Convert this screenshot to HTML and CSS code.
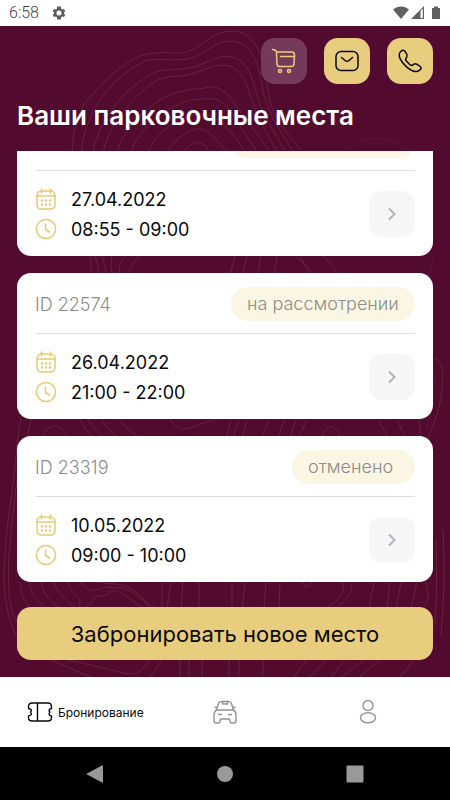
FILE: index.html
```html
<!DOCTYPE html>
<html lang="ru">
<head>
<meta charset="utf-8">
<meta name="viewport" content="width=device-width, initial-scale=1">
<title>Ваши парковочные места</title>
<link rel="stylesheet" href="styles.css">
</head>
<body>
<svg class="sprite" aria-hidden="true">
  <symbol id="calendar" viewBox="0 0 22 22">
    <rect x="2" y="3" width="18" height="18" rx="4.5"/>
    <path d="M2 8H20M6.500 1V5M15.500 1V5"/>
    <path d="M7 12.500h.1M11 12.500h.1M15 12.500h.1M7 16.500h.1M11 16.500h.1M15 16.500h.1" stroke-width="2.4"/>
  </symbol>
  <symbol id="clock" viewBox="0 0 22 22">
    <circle cx="11" cy="11" r="9.6"/>
    <path d="M10.500 6V11.500L14.500 14"/>
  </symbol>
  <symbol id="chevron" viewBox="0 0 14 14">
    <path d="M4 1.500L9.500 7L4 12.500"/>
  </symbol>
</svg>

<div class="app">
  <div class="status">
    <span class="status-time">6:58</span>
    <svg class="gear" viewBox="0 0 24 24" aria-hidden="true"><path fill-rule="evenodd" d="M19.400 13a7.800 7.800 0 0 0 0-2l2.100-1.600-2-3.500-2.500 1a7.500 7.500 0 0 0-1.700-1l-.4-3.600H9.100l-.4 3.600a7.500 7.500 0 0 0-1.700 1l-2.500-1-2 3.500L4.600 11a7.800 7.800 0 0 0 0 2l-2.100 1.600 2 3.500 2.500-1a7.500 7.500 0 0 0 1.700 1l.4 3.600h5.800l.4-3.600a7.500 7.500 0 0 0 1.700-1l2.500 1 2-3.500zM12 8.200a3.800 3.800 0 1 1 0 7.600 3.800 3.800 0 0 1 0-7.600z"/></svg>
    <svg class="signals" viewBox="0 0 50 16" aria-hidden="true">
      <path d="M1 4.500C6 .5 12 .5 17 4.500L9 14z"/>
      <path d="M32 1V14H19zM28.500 6V13H30.800V3.500z" fill-rule="evenodd"/>
      <path d="M42 1.500h4V3h2v11h-8V3h2z"/>
    </svg>
  </div>

  <main class="screen">
    <svg class="contours" viewBox="0 26 450 651" preserveAspectRatio="xMidYMin slice" aria-hidden="true">
      <path d="M72 160C72 120 82 105 92 95C112 72 135 53 155 53C170 51 180 56 192 50C207 43 212 31 233 31C252 32 262 50 266 75C269 98 270 112 285 130C292 140 298 145 304 156"/>
      <path d="M81 160C81 122 105 80 145 61C160 57 180 63 195 57C210 50 215 41 233 41C250 43 258 60 262 85C265 105 275 125 296 156"/>
      <path d="M92 160C95 128 116 95 150 75C164 66 182 72 197 66C212 60 218 55 232 57C246 60 252 75 256 92C261 112 273 130 288 156"/>
      <path d="M102 160C104 135 124 104 152 83C166 73 184 79 200 71C212 66 220 64 230 66C243 71 247 86 251 98C257 118 268 135 280 156"/>
      <path d="M115 160C118 138 138 112 165 97C183 88 198 90 210 87C224 86 230 98 238 108C250 126 262 138 272 156"/>
      <path d="M129 160C132 140 150 118 175 106C190 97 205 99 215 99C228 101 238 125 260 156"/>
      <path d="M146 160C150 140 166 126 183 118C198 112 210 113 220 121C231 132 240 142 247 156"/>
      <path d="M164 160C168 146 179 137 190 131C202 125 210 132 220 144L231 156M180 156C188 145 196 140 203 144L213 156"/>
      <path class="faint" d="M344 151C354 142 362 139 374 139C390 138 400 142 407 150"/>
      <path d="M90 256C91 267 92 272 91 278M95 256C98 266 100 270 97 278M102 256C105 266 107 270 104 278M112 256C110 266 111 270 115 278M126 256C117 266 118 270 122 278M139 256C132 264 128 270 128 278"/>
      <path d="M235 256L229 278M247 256L242 278M261 256L257 278M277 256L274 278M295 256Q306 264 318 278M301 256Q304 266 312 278M323 256Q334 264 339 278"/>
      <path d="M433 358C444 360 444 375 441 398C437 420 430 430 425 445"/>
      <path class="faint" d="M434 372C435 396 432 411 426 430M435 250C430 268 431 276 428 280"/>
      <path d="M22 414C18 430 17 450 13 485C8 520 4 550 4 580C5 605 10 628 19 640M18 472C13 510 11 535 9 555C7 595 10 611 18 624M42 437C48 423 60 422 68 437M31 419L27 437M80 419Q84 430 94 438M88 419Q95 431 105 438M101 419Q110 432 119 438M119 419Q127 430 140 438M170 419Q178 431 187 429L215 419"/>
      <path d="M231 419L226 438M239 419L233 438M247 419L242 438M269 419L262 438M285 419Q281 427 278 438M321 438Q331 415 341 438M296 419L290 438M307 419L299 438M378 419Q382 428 389 438M397 419L405 438M419 419L421 438"/>
      <path d="M20 582C20 592 24 602 32 609M30 582C29 594 39 603 47 609M41 582C43 595 52 604 63 609M54 582C58 594 66 600 76 609M68 582C70 593 84 599 79 604C77 609 91 608 93 600C98 591 105 600 110 592C116 587 128 598 143 608M80 582C93 599 102 583 113 588C129 585 141 601 154 607M95 582C115 585 133 580 150 609M162 582V609M171 582L167 609M183 582L181 609M199 582V609"/>
      <path d="M232 582V609M245 582L242 609M266 582L264 609M280 582L279 609M303 582Q306 592 312 582M325 609C341 600 345 591 343 582M335 609C349 598 352 591 352 582M374 582L369 609M390 582L387 609M401 582L396 609M417 582L411 609M426 582C431 598 426 604 423 609M436 540C437 570 437 590 435 625M443 530C445 570 444 600 441 635"/>
      <path d="M49 659L90 677M65 659L128 674C139 675 147 665 149 659M162 659Q157 669 150 677M180 659V677M189 659V677M202 659V677M229 659V677M239 659V677M263 659V677M307 659L294 677M327 659L310 677M346 659L331 677M365 659L342 677M380 659L360 677M413 659Q407 671 400 677"/>
    </svg>

    <header class="header">
      <div class="actions">
        <button class="action action-muted" type="button" aria-label="Корзина">
          <svg viewBox="0 0 26 26"><path d="M1.500 1.500Q5.500 1.500 5.500 5L6 16Q6 18.500 8.500 18.500H20Q23 18.500 23 15.500L23.500 7Q23.500 4 20.500 4H5.500M9.500 8.500H23"/><circle cx="9" cy="23" r="1.500"/><circle cx="18" cy="23" r="1.500"/></svg>
        </button>
        <button class="action" type="button" aria-label="Сообщения">
          <svg viewBox="0 0 26 26"><rect x="2" y="3.500" width="22" height="19" rx="5"/><path d="M7.500 9.500L11 12.500Q13 14 15 12.500L18.500 9.500"/></svg>
        </button>
        <button class="action" type="button" aria-label="Позвонить">
          <svg viewBox="0 0 26 26"><path d="M4 3.300Q6.500.8 8.500 4L9.800 6.300Q10.700 8.300 9.300 9.800Q7.700 11.500 9.800 13.500L12.500 16.200Q14.500 18.300 16.200 16.700Q17.700 15.300 19.700 16.200L22.800 18.200Q25.700 20.500 22 22.700C19 25 13.500 22.500 9.500 18.900C4.500 14.300-.5 7.300 4 3.300Z"/></svg>
        </button>
      </div>
      <h1 class="title">Ваши парковочные места</h1>
    </header>

    <section class="list" aria-label="Бронирования">
      <article class="card">
        <div class="card-head">
          <span class="card-id"></span>
          <span class="badge badge-wide">&nbsp;</span>
        </div>
        <div class="card-body">
          <div class="when">
            <div class="when-row"><svg class="when-icon"><use href="#calendar"/></svg><span>27.04.2022</span></div>
            <div class="when-row"><svg class="when-icon"><use href="#clock"/></svg><span>08:55 - 09:00</span></div>
          </div>
          <button class="more" type="button" aria-label="Подробнее"><svg><use href="#chevron"/></svg></button>
        </div>
      </article>
      <article class="card">
        <div class="card-head">
          <span class="card-id">ID 22574</span>
          <span class="badge badge-wide">на рассмотрении</span>
        </div>
        <div class="card-body">
          <div class="when">
            <div class="when-row"><svg class="when-icon"><use href="#calendar"/></svg><span>26.04.2022</span></div>
            <div class="when-row"><svg class="when-icon"><use href="#clock"/></svg><span>21:00 - 22:00</span></div>
          </div>
          <button class="more" type="button" aria-label="Подробнее"><svg><use href="#chevron"/></svg></button>
        </div>
      </article>
      <article class="card">
        <div class="card-head">
          <span class="card-id">ID 23319</span>
          <span class="badge">отменено</span>
        </div>
        <div class="card-body">
          <div class="when">
            <div class="when-row"><svg class="when-icon"><use href="#calendar"/></svg><span>10.05.2022</span></div>
            <div class="when-row"><svg class="when-icon"><use href="#clock"/></svg><span>09:00 - 10:00</span></div>
          </div>
          <button class="more" type="button" aria-label="Подробнее"><svg><use href="#chevron"/></svg></button>
        </div>
      </article>
    </section>

    <button class="book" type="button">Забронировать новое место</button>
  </main>

  <nav class="tabs" aria-label="Разделы">
    <a class="tab tab-active" href="#booking">
      <svg viewBox="0 0 26 26"><path d="M5 4H21Q24.500 4 24.500 8V9.500C21.500 10 21.500 12 23 13C21.500 14.500 21.500 16.500 24.500 17V18.500Q24.500 22 21 22H5Q1.500 22 1.500 18.500V17C5 16.500 5 14.500 3.500 13C5 12 5 10 1.500 9.500V8Q1.500 4 5 4ZM10.500 4V22"/></svg>
      <span>Бронирование</span>
    </a>
    <a class="tab" href="#cars" aria-label="Автомобили">
      <svg viewBox="0 0 26 26"><path d="M4.500 11L6.500 4.500Q7 2.500 9.500 2.500H16.500Q19 2.500 19.500 4.500L21.500 11M10.500 2.500V5H15.500V2.500M5 8.500H2.500M21 8.500H23.500M4.500 11H21.500Q23.500 12 24 16V21.500Q24 24 21.500 24H20Q18.500 24 18 22.500L17.500 20H8.500L8 22.500Q7.500 24 6 24H4.500Q2 24 2 21.500V16Q2.500 12 4.500 11ZM6 15.500H10M16 15.500H20"/></svg>
    </a>
    <a class="tab" href="#profile" aria-label="Профиль">
      <svg viewBox="0 0 26 26"><circle cx="13" cy="6.500" r="5"/><ellipse cx="13" cy="18.800" rx="7.500" ry="5"/></svg>
    </a>
  </nav>

  <div class="system">
    <button class="sys" type="button" aria-label="Назад"><svg viewBox="0 0 18 18"><path d="M17 .8Q17 0 16 .5L1 8.500Q.5 9 1 9.500L16 17.500Q17 18 17 17.200Z"/></svg></button>
    <button class="sys" type="button" aria-label="Домой"><svg viewBox="0 0 18 18"><circle cx="9" cy="9" r="8"/></svg></button>
    <button class="sys" type="button" aria-label="Недавние"><svg viewBox="0 0 18 18"><rect x=".5" y=".5" width="17" height="17" rx="1"/></svg></button>
  </div>
</div>
</body>
</html>
```
FILE: styles.css
```css
* { box-sizing: border-box; }

body {
  margin: 0;
  font-family: Inter, "Liberation Sans", sans-serif;
  color: #0a0a0a;
}

button {
  border: 0;
  padding: 0;
  font: inherit;
  color: inherit;
  cursor: pointer;
}

svg { display: block; }

.sprite { display: none; }

.app {
  display: flex;
  flex-direction: column;
  height: 100vh;
  background: #fff;
}

/* Status bar */
.status {
  display: flex;
  align-items: center;
  flex: none;
  height: 26px;
  padding: 0 8px 0 9px;
  font: 300 16px/26px Roboto, sans-serif;
  color: #444;
}
.gear { width: 16px; height: 16px; margin-left: 12px; fill: #5c5c5c; }
.signals { width: 50px; height: 16px; margin-left: auto; fill: #606060; }

/* Main screen */
.screen {
  position: relative;
  display: flex;
  flex-direction: column;
  flex: 1;
  min-height: 0;
  padding: 12px 17px 17px;
  background: #520b2e;
}
.contours {
  position: absolute;
  inset: 0;
  width: 100%;
  height: 100%;
  fill: none;
  stroke: #672342;
  stroke-width: 1;
}
.faint { opacity: .4; }
.header, .list, .book { position: relative; }

.actions { display: flex; justify-content: flex-end; gap: 17px; }
.action {
  display: grid;
  place-items: center;
  width: 46px;
  height: 46px;
  border-radius: 14px;
  background: #e8cd7e;
}
.action-muted { background: #753a59; color: #e8cd7e; }
.action svg {
  width: 26px;
  height: 26px;
  fill: none;
  stroke: currentColor;
  stroke-width: 1.5;
  stroke-linecap: round;
  stroke-linejoin: round;
}
.title {
  margin: 16px 0 19px;
  font-size: 26px;
  line-height: 32px;
  font-weight: 600;
  color: #fff;
  white-space: nowrap;
}

/* Booking list, kept at its last entries */
.list {
  display: flex;
  flex-direction: column;
  justify-content: flex-end;
  gap: 17px;
  flex: 1;
  min-height: 0;
  overflow: hidden;
}
.card {
  flex: none;
  padding: 14px 18px 19px;
  border-radius: 14px;
  background: #fff;
}
.card-head {
  display: flex;
  justify-content: space-between;
  align-items: center;
  padding-bottom: 12px;
  border-bottom: 1px solid #dedede;
  font-size: 18px;
  font-weight: 300;
  color: #8c8c8c;
}
.badge {
  min-width: 123px;
  padding: 0 16px;
  border-radius: 17px;
  line-height: 34px;
  background: #fbf5e3;
}
.badge-wide { min-width: 184px; }
.card-body {
  display: flex;
  justify-content: space-between;
  align-items: center;
  padding-top: 20px;
}
.when { display: grid; gap: 8px; margin: -3px 0; }
.when-row {
  display: flex;
  align-items: center;
  gap: 14px;
  height: 22px;
  font-size: 18px;
}
.when-icon {
  width: 22px;
  height: 22px;
  fill: none;
  stroke: #e6c970;
  stroke-width: 1.5;
  stroke-linecap: round;
}
.more {
  display: grid;
  place-items: center;
  width: 46px;
  height: 46px;
  border-radius: 13px;
  background: #f6f6f6;
}
.more svg {
  width: 14px;
  height: 14px;
  fill: none;
  stroke: #b4b2c0;
  stroke-width: 2;
}

.book {
  flex: none;
  height: 53px;
  margin-top: 25px;
  border-radius: 14px;
  background: #e8cd7e;
  font-size: 22px;
}

/* Bottom tabs */
.tabs {
  display: grid;
  grid-template-columns: repeat(3, 1fr);
  flex: none;
  height: 70px;
  padding: 0 11px;
}
.tab {
  display: flex;
  align-items: center;
  justify-content: center;
  gap: 5px;
  color: #929292;
  font-size: 12px;
  text-decoration: none;
}
.tab-active { padding-left: 6px; color: #0a0a0a; }
.tab svg {
  width: 26px;
  height: 26px;
  fill: none;
  stroke: currentColor;
  stroke-width: 1.4;
  stroke-linejoin: round;
}

/* System navigation */
.system {
  display: flex;
  align-items: center;
  justify-content: center;
  gap: 112px;
  flex: none;
  height: 53px;
  background: #000;
}
.sys { background: none; }
.sys svg { width: 18px; height: 18px; fill: #999; }
```
